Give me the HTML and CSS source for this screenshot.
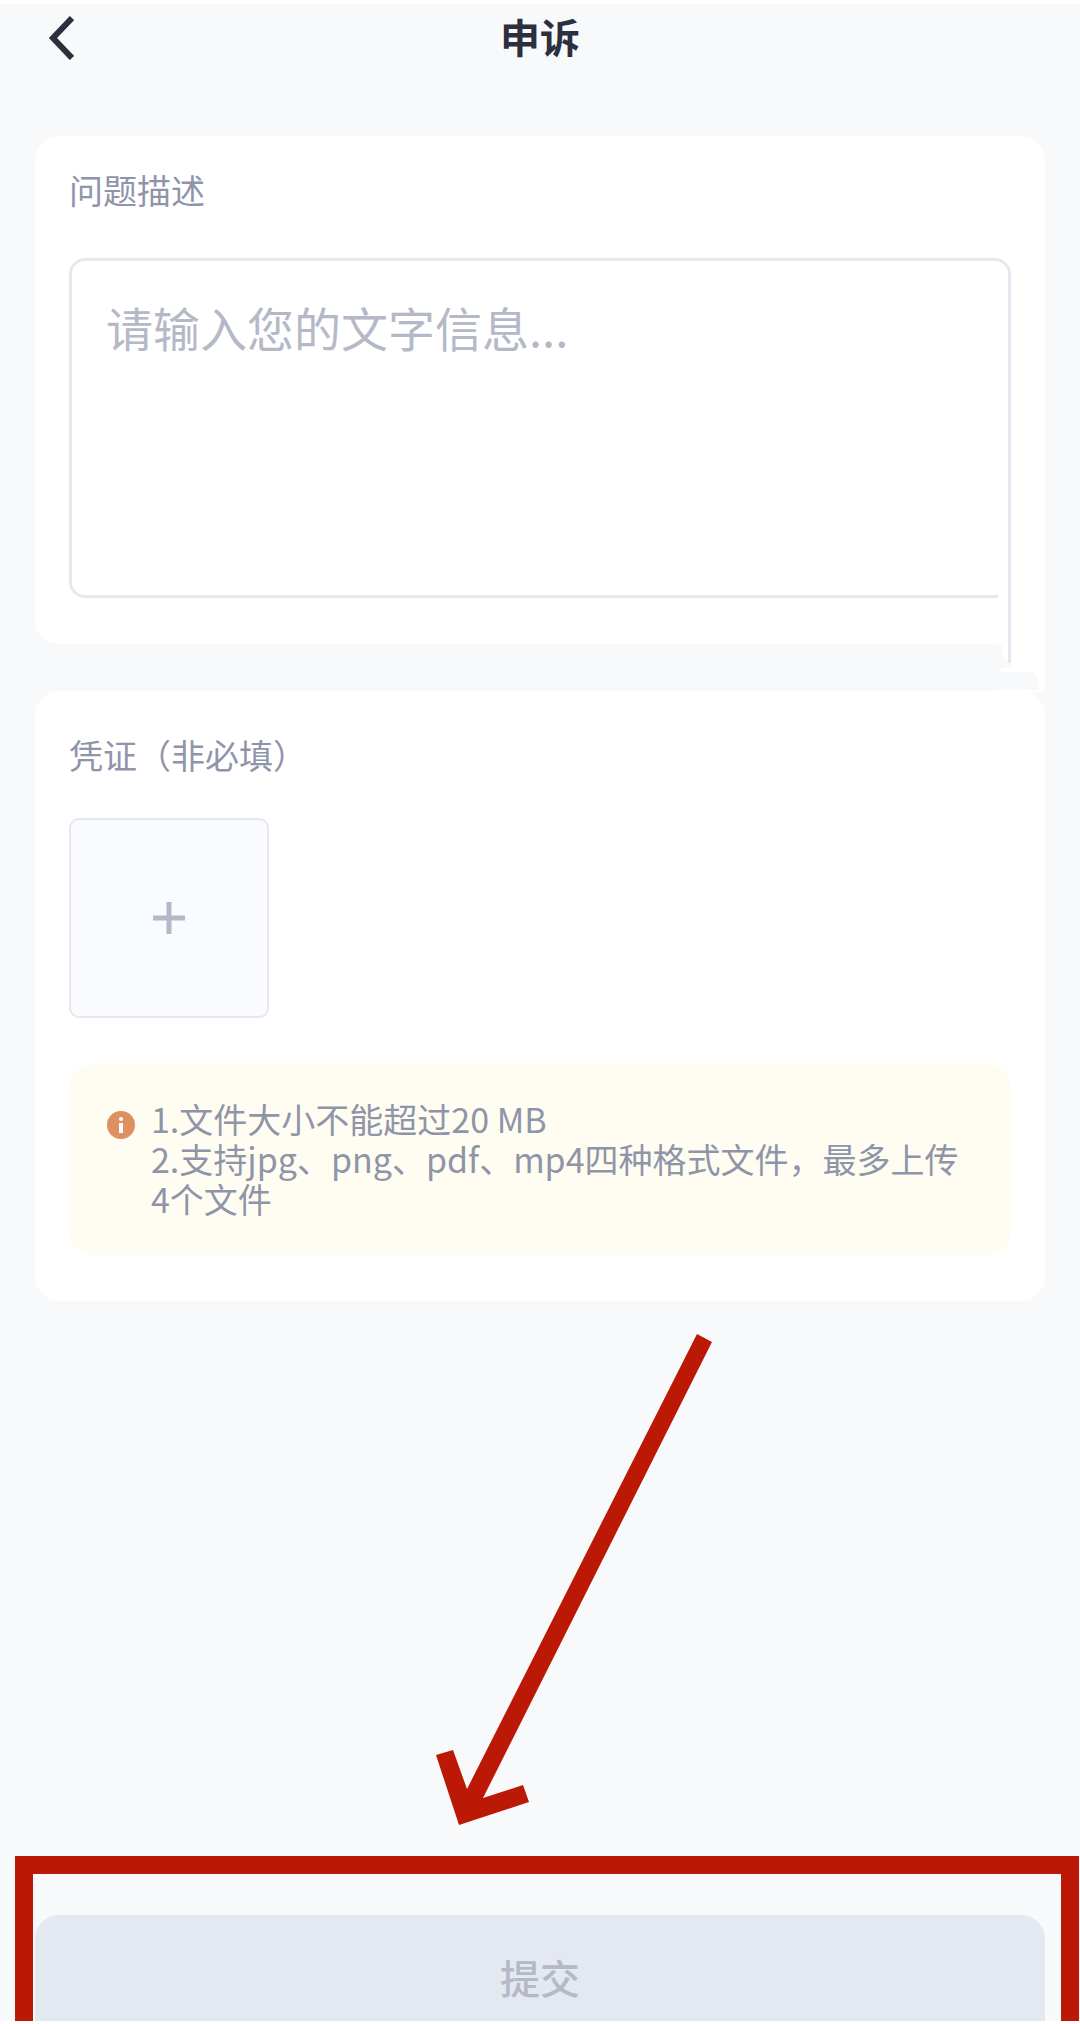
FILE: index.html
```html
<!DOCTYPE html>
<html lang="zh-CN">
  <head>
    <meta charset="UTF-8" />
    <meta name="viewport" content="width=device-width, initial-scale=1.0" />
    <title>申诉</title>
    <link rel="stylesheet" href="styles.css">
  </head>

  <body>
    <header class="header">
      <button class="back" type="button" aria-label="返回">
        <svg width="26" height="44" viewBox="0 0 26 44">
          <path d="M24 2 L5 22 L24 42" fill="none" stroke="#2b2f3e" stroke-width="6" />
        </svg>
      </button>
      <h1 class="title">申诉</h1>
    </header>

    <form class="form" id="appeal">
      <section class="card card-desc">
        <label class="label" for="desc">问题描述</label>
        <textarea class="textarea" id="desc" placeholder="请输入您的文字信息..."></textarea>
        <svg class="seam" width="49" height="116" viewBox="0 0 49 116">
          <path d="M2 0 H49 V116 H0 V60 H2 Z" fill="#fff" />
          <path d="M0 69 H6 V79 L11 86 L18 90 L3 93 L8 96 H37 L40 101 L44 114 H0 Z" fill="#f8f9fb" />
          <path d="M12 0 H15 V87 H12 Z" fill="#e6e8ef" />
        </svg>
      </section>

      <section class="card card-files">
        <label class="label" for="upload">凭证（非必填）</label>
        <button class="upload" id="upload" type="button">
          <svg width="32" height="32" viewBox="0 0 32 32">
            <path d="M0 16 H32 M16 0 V32" stroke="#b5b9c7" stroke-width="5" />
          </svg>
        </button>
        <input class="files" type="file" accept=".jpg,.png,.pdf,.mp4" multiple hidden />
        <div class="notice">
          <svg class="notice-icon" width="28" height="28" viewBox="0 0 28 28">
            <circle cx="14" cy="14" r="14" fill="#dd9062" />
            <circle cx="14" cy="8" r="2" fill="#fff" />
            <path d="M12 12 H16 V22 H12 Z" fill="#fff" />
          </svg>
          <p class="notice-text">
            1.文件大小不能超过20 MB<br />
            2.支持jpg、png、pdf、mp4四种格式文件，最多上传4个文件
          </p>
        </div>
      </section>
    </form>

    <footer class="footer">
      <button class="submit" type="submit" form="appeal" disabled>提交</button>
      <!-- 指向提交按钮的箭头和红框 -->
      <div class="mark"></div>
      <svg class="arrow" width="93" height="491" viewBox="436 1334 93 491">
        <path d="M697 1334 L712 1342 L483 1798 L523 1785 L529 1802 L459 1825 L436 1755 L453 1750 L467 1789 Z" fill="#bb1806" />
      </svg>
    </footer>
    <script>
      const d = document;

      d.querySelector(".upload").addEventListener("click", () => {
        d.querySelector(".files").click();
      });
    </script>
  </body>
</html>
```
FILE: styles.css
```css
html {
  box-sizing: border-box;
  font-family: "Noto Sans CJK SC", sans-serif;
  font-size: 34px;
}

*,
*:before,
*:after {
  box-sizing: inherit;
}

body {
  margin: 0;
  min-height: 100vh;
  display: flex;
  flex-direction: column;
  border-top: 4px solid #fff;
  border-bottom: 3px solid #fff;
  background-color: #f8f9fb;
  color: #8f95a9;
}

button,
textarea {
  font-family: inherit;
}

.header {
  display: grid;
  grid-template-columns: 1fr auto 1fr;
  align-items: start;
  padding: 12px 48px 0;
}

.back {
  display: flex;
  justify-self: start;
  padding: 0;
  border: 0;
  background: none;
}

.title {
  margin: 0;
  font-size: 40px;
  line-height: 40px;
  font-weight: 700;
  color: #2b2f3e;
}

.form {
  display: flex;
  flex-direction: column;
  gap: 47px;
  padding: 76px 35px 0;
}

.card {
  display: flex;
  flex-direction: column;
  position: relative;
  padding: 30px 34px 46px;
  border-radius: 24px;
  background-color: #fff;
}

.card-files {
  padding-top: 40px;
}

.label {
  line-height: 48px;
}

.textarea {
  height: 340px;
  margin-top: 44px;
  padding: 34px;
  border: 3px solid #e6e8ef;
  border-radius: 16px;
  background-color: #fff;
  font-size: 47px;
  line-height: 64px;
  color: #2b2f3e;
  resize: none;
}

.textarea::placeholder {
  color: #b5b9c7;
}

.seam {
  position: absolute;
  right: 0;
  bottom: -48px;
}

.upload {
  display: flex;
  align-items: center;
  justify-content: center;
  width: 200px;
  height: 200px;
  margin: 39px 0 0;
  padding: 0;
  border: 2px solid #e6e8ef;
  border-radius: 10px;
  background-color: #f9fbff;
}

.notice {
  display: flex;
  gap: 16px;
  margin-top: 46px;
  padding: 35px 38px 36px;
  border-radius: 24px;
  background-color: #fffdf1;
}

.notice-icon {
  flex-shrink: 0;
  margin-top: 12px;
}

.notice-text {
  margin: 0;
  line-height: 40px;
}

.footer {
  position: relative;
  margin-top: auto;
  padding: 59px 35px 0;
}

.submit {
  display: block;
  width: 100%;
  padding: 32px 0 14px;
  border: 0;
  border-radius: 24px 24px 0 0;
  background-color: #e4e8f1;
  font-size: 40px;
  line-height: 60px;
  font-weight: 500;
  color: #b5b9c7;
}

.mark {
  position: absolute;
  top: 0;
  right: 1px;
  bottom: 0;
  left: 15px;
  border: 18px solid #bb1806;
  border-bottom: 0;
  pointer-events: none;
}

.arrow {
  position: absolute;
  bottom: calc(100% + 31px);
  left: 436px;
  overflow: visible;
  pointer-events: none;
}
```
